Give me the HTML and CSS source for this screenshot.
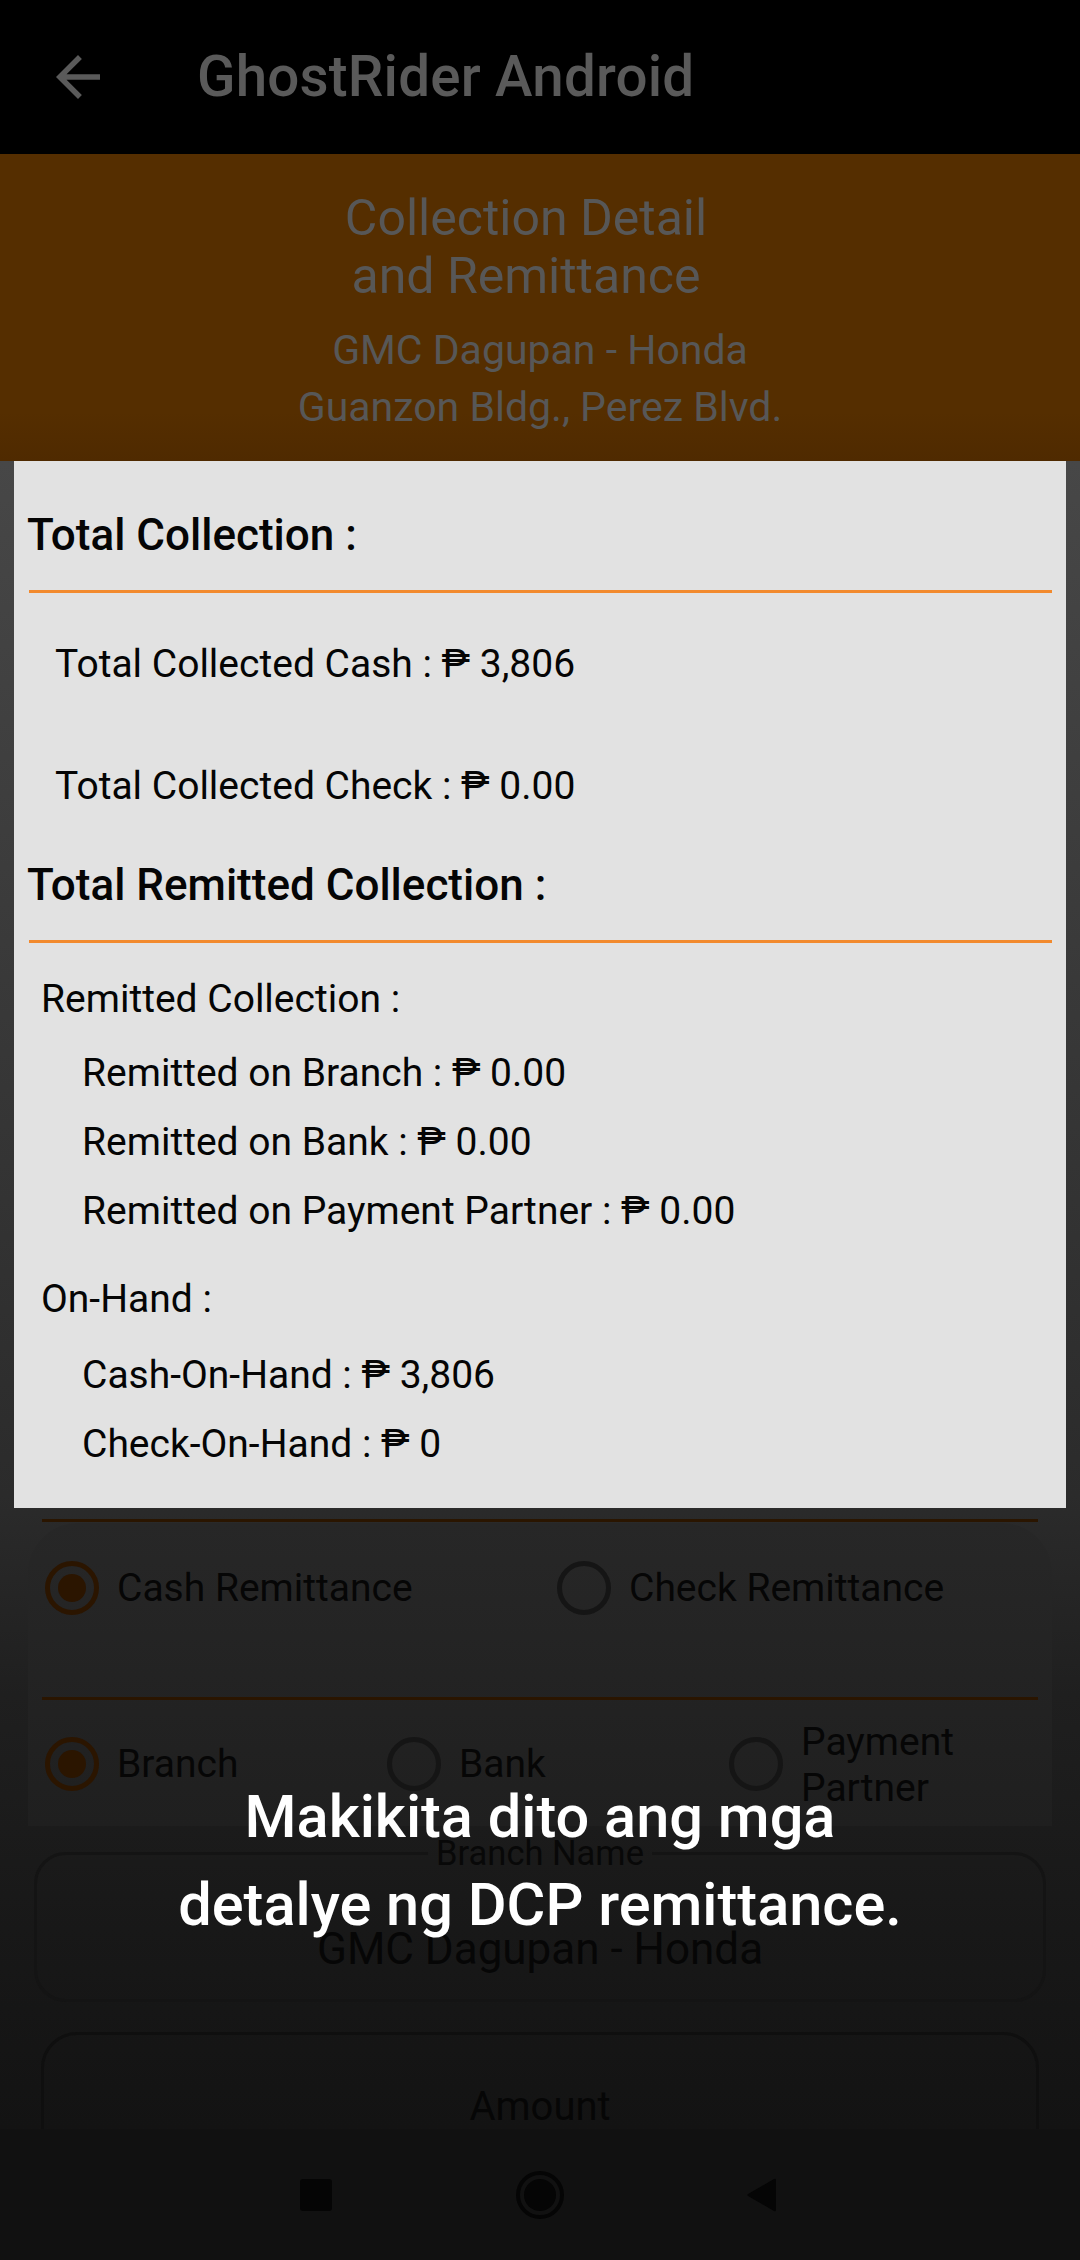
FILE: index.html
```html
<!DOCTYPE html>
<html>
<head>
<meta charset="utf-8">
<link rel="stylesheet" href="styles.css">
</head>
<body>
<div class="screen">
  <header class="appbar">
    <svg class="back" viewBox="0 0 24 24" width="66" height="66"><path d="M20 11H7.83l5.59-5.59L12 4l-8 8 8 8 1.41-1.41L7.83 13H20v-2z" fill="#5a5a5a"/></svg>
    <h1 class="appbar-title">GhostRider Android</h1>
  </header>

  <section class="hero">
    <div class="hero-title">Collection Detail<br>and Remittance</div>
    <div class="hero-sub">GMC Dagupan - Honda<br>Guanzon Bldg., Perez Blvd.</div>
  </section>

  <main class="content">
    <div class="dialog">
      <div class="d-head d-head-first">Total Collection :</div>
      <div class="d-rule"></div>
      <div class="d-total d-cash">Total Collected Cash : ₱ 3,806</div>
      <div class="d-total d-check">Total Collected Check : ₱ 0.00</div>
      <div class="d-head d-head-second">Total Remitted Collection :</div>
      <div class="d-rule"></div>
      <div class="d-group d-group-remit">Remitted Collection :</div>
      <div class="d-item d-item-first">Remitted on Branch : ₱ 0.00</div>
      <div class="d-item">Remitted on Bank : ₱ 0.00</div>
      <div class="d-item">Remitted on Payment Partner : ₱ 0.00</div>
      <div class="d-group d-group-hand">On-Hand :</div>
      <div class="d-item d-item-cash">Cash-On-Hand : ₱ 3,806</div>
      <div class="d-item">Check-On-Hand : ₱ 0</div>
    </div>

    <div class="form">
      <div class="f-rule f-rule-top"></div>
      <div class="card">
        <div class="radio-row radio-row-type">
          <div class="radio-opt"><span class="radio on"></span><span class="radio-label">Cash Remittance</span></div>
          <div class="radio-opt"><span class="radio"></span><span class="radio-label">Check Remittance</span></div>
        </div>
        <div class="f-rule f-rule-mid"></div>
        <div class="radio-row radio-row-dest">
          <div class="radio-opt"><span class="radio on"></span><span class="radio-label">Branch</span></div>
          <div class="radio-opt"><span class="radio"></span><span class="radio-label">Bank</span></div>
          <div class="radio-opt"><span class="radio"></span><span class="radio-label two-line">Payment<br>Partner</span></div>
        </div>
      </div>

      <fieldset class="field field-branch">
        <legend class="field-label">Branch Name</legend>
        <div class="field-value">GMC Dagupan - Honda</div>
      </fieldset>

      <div class="field field-amount">
        <div class="amount-label">Amount</div>
      </div>
    </div>

    <p class="coach">Makikita dito ang mga<br>detalye ng DCP remittance.</p>
  </main>

  <nav class="navbar">
    <span class="nav-square"></span>
    <span class="nav-home"><span class="nav-home-dot"></span></span>
    <svg class="nav-back" viewBox="0 0 31 36" width="31" height="36"><path d="M29 2 L3 17 Q1.5 18 3 19 L29 34 Q31 35 31 33 L31 3 Q31 1 29 2 Z" fill="#050505"/></svg>
  </nav>
</div>
</body>
</html>
```

FILE: styles.css
```css
* { box-sizing: border-box; }

html, body {
  margin: 0;
  padding: 0;
  background: #111111;
}

body {
  font-family: Roboto, "Noto Sans", "Liberation Sans", sans-serif;
}

.screen {
  width: 1080px;
  height: 2260px;
  overflow: hidden;
  display: flex;
  flex-direction: column;
}

/* App bar */
.appbar {
  height: 154px;
  flex: 0 0 154px;
  background: #000;
  display: flex;
  align-items: center;
}

.back {
  margin-left: 45px;
  flex: 0 0 auto;
}

.appbar-title {
  margin: 0 0 0 86px;
  font-size: 56.5px;
  font-weight: 500;
  color: #5a5a5a;
  line-height: 64px;
  letter-spacing: 0.2px;
}

/* Orange hero */
.hero {
  height: 307px;
  flex: 0 0 307px;
  background: linear-gradient(to bottom, #552e00 0%, #552e00 84%, #4f2a00 100%);
  text-align: center;
  color: #575757;
  padding-top: 35px;
}

.hero-title {
  font-size: 50px;
  line-height: 58px;
  padding-right: 28px;
}

.hero-sub {
  margin-top: 17px;
  font-size: 41px;
  line-height: 57px;
}

/* Main area */
.content {
  position: relative;
  flex: 1 1 auto;
  overflow: hidden;
  background: linear-gradient(to bottom, #474747 0%, #2b2b2b 62%, #1f1f1f 74%, #181818 88%, #131313 100%);
}

.dialog {
  margin: 0 14px;
  height: 1047px;
  background: #e2e2e2;
  color: #050505;
  padding-top: 48px;
}

.d-head {
  font-size: 44px;
  line-height: 52px;
  font-weight: 500;
  padding-left: 13px;
}

.d-head-second { margin-top: 38px; }

.d-rule {
  height: 3px;
  margin: 29px 14px 0 15px;
  background: #f28a2e;
}

.d-total {
  font-size: 39px;
  line-height: 69px;
  padding-left: 41px;
}

.d-cash { margin-top: 37px; }
.d-check { margin-top: 53px; }

.d-group {
  font-size: 39px;
  line-height: 69px;
  padding-left: 27px;
}

.d-group-remit { margin-top: 22px; }
.d-group-hand { margin-top: 19px; }

.d-item {
  font-size: 39px;
  line-height: 69px;
  padding-left: 68px;
}

.d-item-first { margin-top: 5px; }
.d-item-cash { margin-top: 7px; }

/* Form behind overlay */
.form {
  color: #060606;
}

.f-rule {
  height: 3px;
  background: #2a1500;
}

.f-rule-top { margin: 11px 42px 0 42px; }
.f-rule-mid { margin: 44px 14px 0 14px; }

.card {
  margin: 1px 28px 0 28px;
  height: 303px;
  border-radius: 50px 50px 0 0;
  background: linear-gradient(to bottom, #272727, #1f1f1f);
}

.radio-row {
  display: grid;
  align-items: center;
  padding-left: 17px;
}

.radio-row-type {
  height: 130px;
  grid-template-columns: 512px 1fr;
}

.radio-row-dest {
  height: 127px;
  grid-template-columns: 342px 342px 1fr;
}

.radio-opt {
  display: flex;
  align-items: center;
}

.radio {
  width: 54px;
  height: 54px;
  flex: 0 0 54px;
  border-radius: 50%;
  border: 5px solid #151515;
  display: flex;
  align-items: center;
  justify-content: center;
}

.radio.on { border-color: #2b1500; }

.radio.on::after {
  content: "";
  width: 28px;
  height: 28px;
  border-radius: 50%;
  background: #2b1500;
}

.radio-label {
  margin-left: 18px;
  font-size: 39px;
  line-height: 48px;
}

.radio-label.two-line {
  line-height: 46px;
  margin-top: 2px;
}

.field {
  border: 3px solid #141414;
  border-radius: 32px;
  text-align: center;
}

.field-branch {
  margin: 10px 34px 0 34px;
  height: 166px;
  padding: 0;
  min-width: 0;
}

.field-label {
  margin: 0 auto;
  padding: 0 8px;
  font-size: 34.5px;
  line-height: 34px;
  color: #080808;
}

.field-value {
  font-size: 44px;
  line-height: 50px;
  margin-top: 54px;
}

.field-amount {
  margin: 30px 41px 0 41px;
  height: 160px;
  border-radius: 36px;
  border-color: #0f0f0f;
}

.amount-label {
  font-size: 40px;
  line-height: 44px;
  margin-top: 50px;
}

/* Coach-mark text over the dimmed screen */
.coach {
  position: absolute;
  left: 0;
  right: 0;
  top: 1312px;
  margin: 0;
  text-align: center;
  color: #ffffff;
  font-size: 59.5px;
  line-height: 88px;
  font-weight: 500;
}

/* System nav bar */
.navbar {
  height: 131px;
  flex: 0 0 131px;
  background: #111111;
  display: flex;
  align-items: center;
  padding-left: 300px;
}

.nav-square {
  width: 32px;
  height: 32px;
  border-radius: 3px;
  background: #050505;
}

.nav-home {
  margin-left: 184px;
  width: 48px;
  height: 48px;
  border-radius: 50%;
  border: 4px solid #050505;
  display: flex;
  align-items: center;
  justify-content: center;
}

.nav-home-dot {
  width: 32px;
  height: 32px;
  border-radius: 50%;
  background: #050505;
}

.nav-back {
  margin-left: 181px;
}
```
